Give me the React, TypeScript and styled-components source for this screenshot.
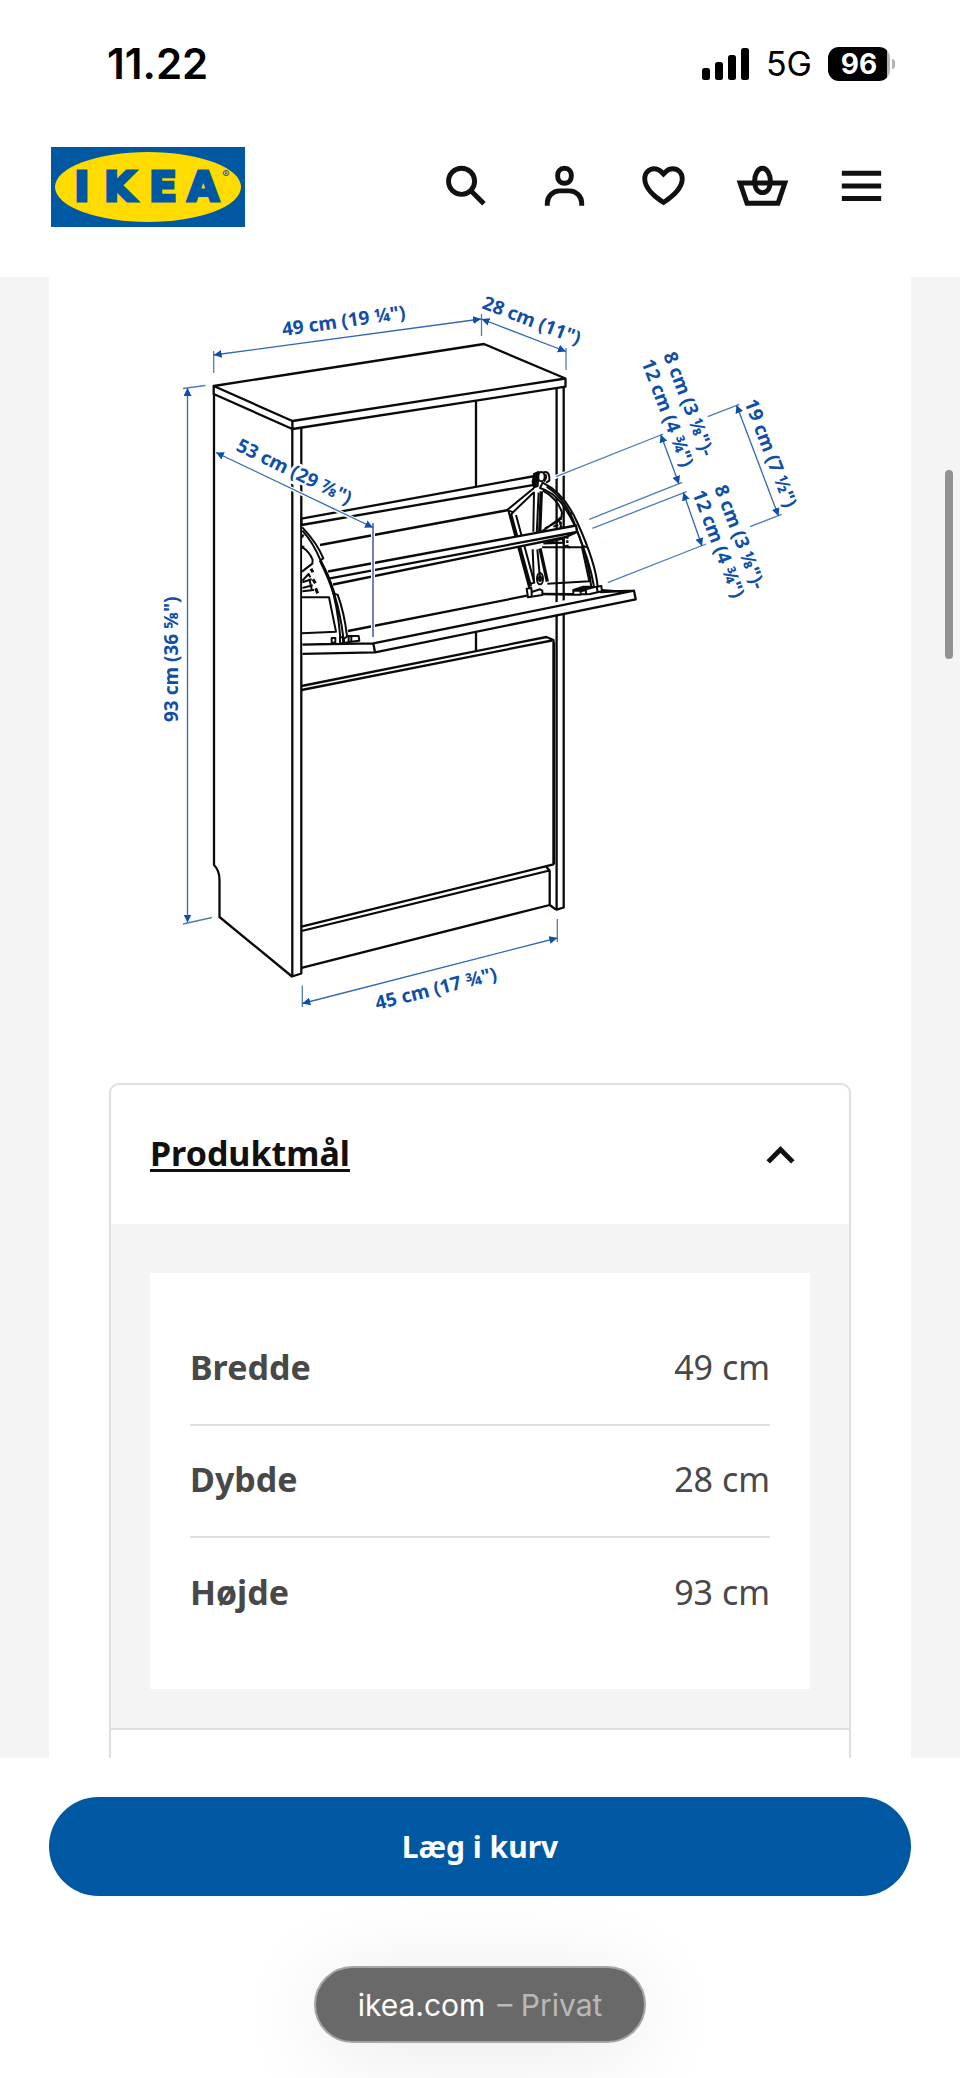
import React from 'react';
import styled, { createGlobalStyle } from 'styled-components';

const GlobalStyle = createGlobalStyle`
  *, *::before, *::after { box-sizing: border-box; }
  body {
    margin: 0;
    background: #ffffff;
    color: #111111;
    font-family: 'Noto Sans', 'Open Sans', sans-serif;
  }
  button { font: inherit; color: inherit; border: 0; background: none; padding: 0; cursor: pointer; }
`;

const Page = styled.div`
  position: relative;
  display: flex;
  flex-direction: column;
  height: 100vh;
  overflow: hidden;
`;

const StatusBar = styled.div`
  display: flex;
  align-items: center;
  justify-content: space-between;
  padding: 40px 65px 9px 107px;
  font-family: Inter, sans-serif;
  color: #000000;
`;

const Clock = styled.time`
  font-size: 42px;
  line-height: 48px;
  font-weight: 600;
`;

const StatusIcons = styled.div`
  display: flex;
  align-items: center;
  gap: 16px;
`;

const Network = styled.span`
  font-size: 34px;
  line-height: 48px;
  font-weight: 400;
`;

const BatteryGroup = styled.div`
  display: flex;
  align-items: center;
  gap: 2px;
`;

const Battery = styled.div`
  width: 62px;
  height: 34px;
  border-radius: 11px;
  background: linear-gradient(90deg, #000000 59px, #b4b4b4 59px);
  color: #ffffff;
  font-size: 28px;
  line-height: 34px;
  font-weight: 700;
  text-align: center;
`;

const BatteryTip = styled.div`
  width: 3px;
  height: 10px;
  border-radius: 0 4px 4px 0;
  background: #b4b4b4;
`;

const Header = styled.header`
  display: flex;
  align-items: center;
  justify-content: space-between;
  padding: 50px 69px 50px 51px;
`;

const LogoLink = styled.a`
  display: block;
  height: 80px;
`;

const Nav = styled.nav`
  display: flex;
  gap: 40px;
  padding-bottom: 3px;
`;

const IconButton = styled.button`
  display: block;
  width: 59px;
  height: 59px;
`;

const Viewport = styled.main`
  flex: 1;
  min-height: 0;
  overflow: hidden;
  padding: 0 49px;
  background: #f4f4f4;
`;

const Sheet = styled.div`
  background: #ffffff;
  padding: 0 60px;
`;

const Drawing = styled.svg`
  display: block;
  width: 100%;
  height: auto;
`;

const Accordion = styled.div`
  border: 2px solid #dfdfdf;
  border-radius: 10px;
  overflow: hidden;
`;

const AccordionHeader = styled.button`
  display: flex;
  align-items: center;
  justify-content: space-between;
  width: 100%;
  height: 139px;
  padding: 0 39px;
`;

const AccordionTitle = styled.span`
  padding-bottom: 4px;
  font-size: 34px;
  line-height: 48px;
  font-weight: 700;
  text-decoration: underline;
  text-decoration-thickness: 3px;
  text-underline-offset: 3px;
`;

const AccordionBody = styled.div`
  padding: 49px 39px 39px;
  background: #f4f4f4;
`;

const Measures = styled.div`
  padding: 40px;
  background: #ffffff;
`;

const MeasureTable = styled.table`
  width: 100%;
  border-collapse: collapse;
  font-size: 34px;
  line-height: 48px;
  color: #484848;

  th, td { height: 112px; padding: 0 0 4px; }
  th { text-align: left; font-weight: 700; }
  td { text-align: right; }
  tr + tr { border-top: 2px solid #dfdfdf; }
`;

const NextSection = styled.div`
  height: 139px;
  border-top: 2px solid #dfdfdf;
`;

const Footer = styled.footer`
  display: flex;
  flex-direction: column;
  gap: 70px;
  padding: 39px 49px 35px;
`;

const BuyButton = styled.button`
  width: 100%;
  height: 99px;
  border-radius: 50px;
  background: #0058a3;
  color: #ffffff;
  font-size: 30px;
  line-height: 40px;
  font-weight: 700;
`;

const AddressPill = styled.button`
  display: flex;
  align-items: center;
  justify-content: center;
  align-self: center;
  gap: 12px;
  height: 77px;
  padding: 0 42px;
  border: 2px solid #a6a6a6;
  border-radius: 39px;
  background: #696969;
  box-shadow: 0 10px 90px rgba(0, 0, 0, 0.09);
  color: #ffffff;
  font-family: Inter, sans-serif;
  font-size: 30px;
  line-height: 40px;
`;

const PrivateNote = styled.span`
  color: #b9b9b9;
`;

const ScrollThumb = styled.div`
  position: absolute;
  top: 470px;
  right: 7px;
  width: 8px;
  height: 189px;
  border-radius: 4px;
  background: #929292;
`;

function Logo() {
  return (
    <svg width="194" height="80" viewBox="0 0 194 80" role="img" aria-label="IKEA">
      <rect width="194" height="80" fill="#0058a3" />
      <ellipse cx="97" cy="40" rx="93" ry="35" fill="#ffdb00" />
      <text
        y="54"
        fontFamily="'DejaVu Sans', sans-serif"
        fontSize="41"
        fontWeight="700"
        fill="#0058a3"
        stroke="#0058a3"
        strokeWidth="3"
        textAnchor="middle"
      >
        <tspan x="31">I</tspan>
        <tspan x="69">K</tspan>
        <tspan x="112">E</tspan>
        <tspan x="152">A</tspan>
      </text>
      <text x="175" y="31" fontFamily="Inter, sans-serif" fontSize="11" fill="#0058a3" textAnchor="middle">®</text>
    </svg>
  );
}

function Signal() {
  return (
    <svg width="48" height="32" viewBox="0 0 48 32" aria-hidden="true">
      <rect x="0" y="20" width="8" height="12" rx="2.5" />
      <rect x="13" y="14" width="8" height="18" rx="2.5" />
      <rect x="26" y="7" width="8" height="25" rx="2.5" />
      <rect x="39" y="0" width="8" height="32" rx="2.5" />
    </svg>
  );
}

function Glyph({ children }: { children: React.ReactNode }) {
  return (
    <svg width="59" height="59" viewBox="0 0 24 24" fill="none" stroke="#111111" strokeWidth="2" aria-hidden="true">
      {children}
    </svg>
  );
}

const navItems = [
  {
    label: 'Søg',
    icon: (
      <>
        <circle cx="10.4" cy="10.3" r="5.3" />
        <path d="M14.1 14l5.4 5.4" />
      </>
    ),
  },
  {
    label: 'Profil',
    icon: (
      <>
        <path d="M12 5c1.8 0 2.8 1.2 2.8 3s-1 3.1-2.8 3.1S9.200 9.800 9.200 8 10.200 5 12 5z" />
        <path d="M5 20.200V19.200a5 5 0 0 1 5-5h4a5 5 0 0 1 5 5v1" />
      </>
    ),
  },
  {
    label: 'Favoritter',
    icon: (
      <path
        fill="#111111"
        stroke="none"
        fillRule="evenodd"
        d="M19.205 5.599c.954.954 1.414 2.279 1.419 3.614 0 3.066-2.203 5.726-4.137 7.501-1.215 1.116-2.554 2.140-3.981 2.973L12 20.001l-.501-.309c-.974-.563-1.888-1.227-2.765-1.930-1.140-.911-2.460-2.127-3.502-3.553-1.037-1.418-1.859-3.125-1.860-4.996-.002-1.251.394-2.589 1.419-3.615 1.898-1.897 4.974-1.897 6.872 0l.335.335.336-.335c1.873-1.872 4.999-1.872 6.871 0zM12 17.650c.670-.430 1.908-1.283 3.135-2.409 1.878-1.725 3.488-3.870 3.489-6.026-.003-.849-.264-1.633-.833-2.202-1.104-1.103-2.941-1.100-4.045.002L11.995 8.760l-1.746-1.746c-1.107-1.107-2.939-1.107-4.046 0-.627.627-.836 1.449-.833 2.198C5.370 11.370 6.980 13.500 8.860 15.240 10.090 16.370 11.330 17.220 12 17.650z"
      />
    ),
  },
  {
    label: 'Kurv',
    icon: (
      <>
        <path d="M2.900 11h18.200l-2.800 8.200H5.700z" />
        <path d="M12 5c1.900 0 3.200 2.600 3.200 5.200 0 2.900-1.300 4.700-3.200 4.700s-3.200-1.800-3.200-4.700C8.800 7.600 10.100 5 12 5z" />
      </>
    ),
  },
  { label: 'Menu', icon: <path d="M4 7h16M4 12.200h16M4 17.300h16" /> },
];

const measures = [
  ['Bredde', '49 cm'],
  ['Dybde', '28 cm'],
  ['Højde', '93 cm'],
];

type LabelProps = { x: number; y: number; turn: number; children: string };

function DimensionLabel({ x, y, turn, children }: LabelProps) {
  return (
    <text transform={`translate(${x} ${y}) rotate(${turn})`} stroke="#ffffff" strokeWidth="5" paintOrder="stroke">
      {children}
    </text>
  );
}

function CabinetDrawing() {
  return (
    <Drawing viewBox="109 277 742 806" role="img" aria-label="Skoskab med mål">
      <defs>
        <marker id="tip" viewBox="0 0 8 8" refX="8" refY="4" markerWidth="8" markerHeight="8" markerUnits="userSpaceOnUse" orient="auto-start-reverse">
          <path d="M0 0L8 4L0 8z" fill="#0f4fa8" />
        </marker>
      </defs>

      <g fill="none" stroke="#0a0a0a" strokeWidth="2.300" strokeLinejoin="round">
        {/* carcass */}
        <path d="M213.700 386L484 344L565.500 378.500V386.700L292.400 429L213.700 394zM213.700 386L292.400 421L565.500 378.500M292.400 421V429" />
        <path d="M214 394V865C218 869 219.500 874 219.500 880V917L292 976.500L301.300 973.500V428M292.300 429V976" />
        <path d="M476 400.500V651M556.600 388V909.700L563.700 907.500V387" />
        {/* closed door and plinth */}
        <path d="M301.500 686L546.500 637L553.500 640V864.300L301.500 926.700M301.500 690L552 640.500M301.500 931L549.500 870.500L546 866.500M549.700 871V905L301.500 967.800M549.700 905L556 909.700" />
        <path d="M554 642V864" />
        {/* tilted front panel and bin interior */}
        <path fill="#ffffff" stroke="none" d="M302.500 520L535 478L509 510L530 594L546 608L373 643H302.500z" />
        <path fill="#ffffff" stroke="none" d="M302.500 644.300H373.300L600 592L634 590.700L635.700 599.300L375 652.300L302.500 654z" />
        <path d="M302.500 644.500L373.300 643.300L634 590.700L635.700 599.300L375 652.300L302.500 653.800M373.300 643.300L375 652.300M348 631L527 595.700M600 592L634 590.700" />
        {/* bin rails */}
        <path fill="#ffffff" d="M301.500 518.700L535 476L537 484.300L301.500 525z" />
        <path d="M320 545L508.500 510" />
      </g>

      {/* right hinge bracket */}
      <g transform="translate(490 460) scale(.3333)" fill="none" stroke="#0a0a0a" strokeWidth="6" strokeLinejoin="round">
        <path d="M132 84L54 148L118 385M130 98L74 152L62 165M52 150L72 158" />
        <path strokeWidth="9" d="M62 162L122 380" />
        <path d="M78 165L133 368L118 372" />
        <path d="M132 95L130 215M146 98L140 225" />
        <path strokeWidth="10" d="M154 94L149 220" />
        <path d="M158 92C185 105 208 130 216 158L214 172L155 215M165 205L208 182L215 205M190 200L205 195" />
        <path strokeWidth="7" strokeDasharray="8 5" d="M212 172V200M232 228V262" />
        <path d="M128 268L132 370M142 268L150 355M156 262H276L298 364L172 371" />
        <path strokeWidth="10" d="M150 265L172 365" />
        <path strokeWidth="7" d="M170 246L218 236L222 248L160 250M222 258L240 262" />
        <ellipse cx="150" cy="356" rx="9" ry="17" />
        <ellipse cx="150" cy="356" rx="3" ry="7" />
        <path fill="#ffffff" d="M158 68C215 95 245 148 264 192C290 250 318 320 323 380L304 382C298 330 288 290 278 258C262 205 240 165 215 130C195 105 170 90 150 84z" />
        <path d="M170 80C225 115 250 175 262 215C285 275 302 320 312 380M232 155L246 162M278 258L292 262" />
        <path fill="#0a0a0a" d="M132 42L146 36L143 78L132 82L128 66z" />
        <ellipse cx="154" cy="50" rx="10" ry="14" />
        <path d="M160 37C174 32 180 44 178 62L168 68M166 42C170 48 168 60 162 64" />
        <path fill="#ffffff" d="M110 386L124 384L125 396L150 388L157 392V405L114 412z" />
        <path d="M125 396V410" />
        <path strokeWidth="8" d="M157 402L250 403" />
        <path fill="#0a0a0a" d="M250 390L280 380L306 380L290 392z" />
        <path fill="#ffffff" d="M250 392H272V404H250zM272 394L288 390V403H272zM288 388L320 380L334 378L336 394L300 402L288 403z" />
        <path d="M320 380L323 396M336 390L412 396" />
      </g>

      {/* middle shelf */}
      <g fill="#ffffff" stroke="#0a0a0a" strokeWidth="2.300" strokeLinejoin="round">
        <path stroke="none" d="M328 571.500L576 525.500L577 532L563 538L333 584.500z" />
        <path fill="none" d="M328 571.500L576 525.500L577 532L330 578.300M333 584.500L566 537L577 532" />
      </g>

      {/* left hinge bracket */}
      <g transform="translate(280 500) scale(.3333)" fill="none" stroke="#0a0a0a" strokeWidth="6" strokeLinejoin="round">
        <path fill="#ffffff" stroke="none" d="M67 82C95 112 118 145 130 175L165 280L178 290C190 330 198 370 202 410L186 428L67 430z" />
        <path d="M67 82C95 112 118 145 130 175L121 182L145 228L162 282L173 284C188 325 196 365 201 408M67 92C98 125 112 158 122 182" />
        <path strokeWidth="9" d="M121 182C140 220 155 258 164 286" />
        <path d="M164 286C176 325 184 365 190 412M150 245C168 300 176 355 181 412" />
        <path strokeWidth="10" d="M65 106L71 110M65 141L72 143" />
        <path d="M68 142C80 150 92 164 98 180L97 191L66 215M67 242L86 222L91 232M67 247L95 238M67 264L98 256M67 274L102 270M88 236L96 272" />
        <path strokeWidth="9" d="M93 206L99 217M99 238L106 250M107 265L113 280" />
        <path d="M66 292H147L168 395L66 400" />
        <path d="M155 414H166V428H155zM180 412H189V430H180z" fill="#ffffff" />
        <path fill="#ffffff" d="M192 416L204 408H236L238 422L206 426L192 430z" />
        <path d="M206 408V426M214 410V424" />
      </g>

      {/* dimension lines */}
      <g fill="none" stroke="#4f7cb8" strokeWidth="1.300">
        <path stroke="#ffffff" strokeWidth="4" d="M373 527V633M216 452.500L370 526.500M554 477.500L568 472" />
        <path d="M213.700 351V373M481.500 314V336M566 348V370M183 388.500L205.500 385.500M183 924L212 917.500M302.300 985.500V1007M557.300 919V942" />
        <path stroke="#7681b8" strokeWidth="2" d="M373 523V637" />
        <path d="M556 476.700L663.300 434M589.300 519.300L682.300 482.300M592.300 528.300L686.700 491.700M607.700 582.700L706 544M707.700 416.700L739.300 404.300M750 526.700L781.700 514.300" />
        <g stroke="#3068b4" markerStart="url(#tip)" markerEnd="url(#tip)">
          <path d="M213.700 355L481 319" />
          <path d="M481.500 319L566 351.500" />
          <path d="M187.500 388V922.500" />
          <path d="M216 452.500L373 527.500" />
          <path d="M302.300 1003.500L557.300 938" />
          <path d="M660.700 434.500L679 484" />
          <path d="M683.300 492.500L702 546" />
          <path d="M736.500 405L778.500 516" />
        </g>
      </g>

      <g fill="#0f4fa8" fontFamily="'Noto Sans', sans-serif" fontSize="19" fontWeight="700">
        <DimensionLabel x={283} y={336} turn={-8}>49 cm (19 ¼")</DimensionLabel>
        <DimensionLabel x={481} y={308} turn={21}>28 cm (11")</DimensionLabel>
        <DimensionLabel x={178} y={722} turn={-90}>93 cm (36 ⅝")</DimensionLabel>
        <DimensionLabel x={235} y={450} turn={26}>53 cm (29 ⅞")</DimensionLabel>
        <DimensionLabel x={377} y={1010} turn={-14}>45 cm (17 ¾")</DimensionLabel>
        <DimensionLabel x={663} y={355} turn={69}>8 cm (3 ⅛")-</DimensionLabel>
        <DimensionLabel x={641} y={362} turn={69}>12 cm (4 ¾")</DimensionLabel>
        <DimensionLabel x={744} y={402} turn={69}>19 cm (7 ½")</DimensionLabel>
        <DimensionLabel x={714} y={488} turn={69}>8 cm (3 ⅛")-</DimensionLabel>
        <DimensionLabel x={692} y={493} turn={69}>12 cm (4 ¾")</DimensionLabel>
      </g>
    </Drawing>
  );
}

export default function App() {
  return (
    <Page>
      <GlobalStyle />
      <StatusBar>
        <Clock>11.22</Clock>
        <StatusIcons>
          <Signal />
          <Network>5G</Network>
          <BatteryGroup>
            <Battery>96</Battery>
            <BatteryTip />
          </BatteryGroup>
        </StatusIcons>
      </StatusBar>
      <Header>
        <LogoLink href="#">
          <Logo />
        </LogoLink>
        <Nav>
          {navItems.map(({ label, icon }) => (
            <IconButton key={label} type="button" aria-label={label}>
              <Glyph>{icon}</Glyph>
            </IconButton>
          ))}
        </Nav>
      </Header>
      <Viewport>
        <Sheet>
          <CabinetDrawing />
          <Accordion>
            <AccordionHeader type="button" aria-expanded="true" aria-controls="product-measures">
              <AccordionTitle>Produktmål</AccordionTitle>
              <Glyph>
                <path d="M7 15l5-5 5 5" />
              </Glyph>
            </AccordionHeader>
            <AccordionBody id="product-measures">
              <Measures>
                <MeasureTable>
                  <tbody>
                    {measures.map(([name, value]) => (
                      <tr key={name}>
                        <th scope="row">{name}</th>
                        <td>{value}</td>
                      </tr>
                    ))}
                  </tbody>
                </MeasureTable>
              </Measures>
            </AccordionBody>
            <NextSection />
          </Accordion>
        </Sheet>
      </Viewport>
      <Footer>
        <BuyButton type="button">Læg i kurv</BuyButton>
        <AddressPill type="button">
          <span>ikea.com</span>
          <PrivateNote>– Privat</PrivateNote>
        </AddressPill>
      </Footer>
      <ScrollThumb />
    </Page>
  );
}
